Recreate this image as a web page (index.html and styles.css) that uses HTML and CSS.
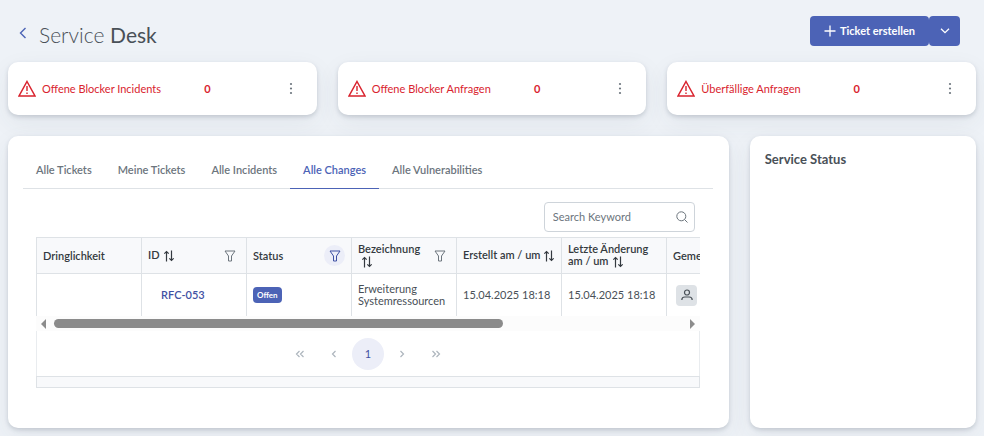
FILE: index.html
```html
<!DOCTYPE html>
<html lang="de">
<head>
<meta charset="utf-8">
<meta name="viewport" content="width=device-width, initial-scale=1">
<title>Service Desk</title>
<link rel="stylesheet" href="styles.css">
</head>
<body>
<svg class="sprite" aria-hidden="true">
  <symbol id="warn" viewBox="0 0 18 17"><path d="M9 1.500 17 16H1Z" fill="none" stroke="currentColor" stroke-width="1.500"/><path d="M9 6v5M9 12.500v1.500" fill="none" stroke="currentColor" stroke-width="1.400"/></symbol>
  <symbol id="dots" viewBox="0 0 14 14"><g fill="currentColor"><circle cx="7" cy="2" r="1.100"/><circle cx="7" cy="6.500" r="1.100"/><circle cx="7" cy="11" r="1.100"/></g></symbol>
  <symbol id="sort" viewBox="0 0 10 12"><path d="M2.500 11.500V1.500M.3 3.700l2.200-2.200 2.200 2.200M7.500 .5v10M5.300 8.300l2.200 2.200 2.200-2.200" fill="none" stroke="currentColor" stroke-width="1.200"/></symbol>
  <symbol id="filter" viewBox="0 0 12 12"><path d="M1 1h10L7.500 6v5H4.500V6Z" fill="none" stroke="currentColor" stroke-linejoin="round"/></symbol>
</svg>
<header class="topbar">
  <a class="back" href="#" aria-label="Zurück"><svg width="8" height="12" viewBox="0 0 8 12"><path d="M6.500 1 1.500 6l5 5" fill="none" stroke="currentColor" stroke-width="1.400"/></svg></a>
  <h1>Service <span>Desk</span></h1>
  <div class="split">
    <button class="primary create" type="button"><svg width="12" height="12" viewBox="0 0 12 12"><path d="M6 .5v11M.5 6h11" fill="none" stroke="currentColor" stroke-width="1.300"/></svg>Ticket erstellen</button>
    <button class="primary more" type="button" aria-label="Weitere Aktionen"><svg width="10" height="6" viewBox="0 0 10 6"><path d="m1 .7 4 4 4-4" fill="none" stroke="currentColor" stroke-width="1.300"/></svg></button>
  </div>
</header>
<main class="grid">
  <section class="card kpi">
    <svg class="warn"><use href="#warn"/></svg>
    <span class="kpi-label">Offene Blocker Incidents</span><span class="kpi-value">0</span>
    <button class="plain menu" type="button" aria-label="Menü"><svg width="14" height="14"><use href="#dots"/></svg></button>
  </section>
  <section class="card kpi">
    <svg class="warn"><use href="#warn"/></svg>
    <span class="kpi-label">Offene Blocker Anfragen</span><span class="kpi-value">0</span>
    <button class="plain menu" type="button" aria-label="Menü"><svg width="14" height="14"><use href="#dots"/></svg></button>
  </section>
  <section class="card kpi">
    <svg class="warn"><use href="#warn"/></svg>
    <span class="kpi-label">Überfällige Anfragen</span><span class="kpi-value">0</span>
    <button class="plain menu" type="button" aria-label="Menü"><svg width="14" height="14"><use href="#dots"/></svg></button>
  </section>

  <section class="card tickets">
    <nav class="tabs">
      <a href="#">Alle Tickets</a><a href="#">Meine Tickets</a><a href="#">Alle Incidents</a><a href="#" class="active" aria-current="page">Alle Changes</a><a href="#">Alle Vulnerabilities</a>
    </nav>
    <div class="panel">
      <div class="toolbar">
        <label class="search"><input type="text" placeholder="Search Keyword" aria-label="Search Keyword"><svg width="12" height="12" viewBox="0 0 12 12"><g fill="none" stroke="currentColor"><circle cx="5.300" cy="5.300" r="4.500"/><path d="m8.500 8.500 3 3"/></g></svg></label>
      </div>
      <div class="scroller">
        <table>
          <thead>
            <tr>
              <th>Dringlichkeit</th>
              <th><div class="head"><span>ID<svg class="sort"><use href="#sort"/></svg></span><button class="plain filter" type="button" aria-label="ID filtern"><svg width="12" height="12"><use href="#filter"/></svg></button></div></th>
              <th><div class="head"><span>Status</span><button class="plain filter on" type="button" aria-label="Status filtern"><svg width="12" height="12"><use href="#filter"/></svg></button></div></th>
              <th><div class="head"><span>Bezeichnung<svg class="sort"><use href="#sort"/></svg></span><button class="plain filter" type="button" aria-label="Bezeichnung filtern"><svg width="12" height="12"><use href="#filter"/></svg></button></div></th>
              <th>Erstellt am / um<svg class="sort"><use href="#sort"/></svg></th>
              <th>Letzte Änderung am / um<svg class="sort"><use href="#sort"/></svg></th>
              <th>Geme</th>
            </tr>
          </thead>
          <tbody>
            <tr>
              <td></td>
              <td><a class="ticket" href="#">RFC-053</a></td>
              <td><span class="badge">Offen</span></td>
              <td>Erweiterung Systemressourcen</td>
              <td>15.04.2025 18:18</td>
              <td>15.04.2025 18:18</td>
              <td><span class="avatar"><svg width="12" height="12" viewBox="0 0 12 12"><g fill="none" stroke="currentColor" stroke-width="1.200"><circle cx="6" cy="3.500" r="2.500"/><path d="M.8 11c0-2 1.200-3 3-3h4.400c1.800 0 3 1 3 3"/></g></svg></span></td>
            </tr>
          </tbody>
        </table>
      </div>
      <div class="scrollbar" aria-hidden="true"><i class="arrow left"></i><div class="track"><div class="thumb"></div></div><i class="arrow right"></i></div>
      <nav class="pager" aria-label="Seiten">
        <button class="plain" type="button" disabled aria-label="Erste Seite"><svg width="10" height="8" viewBox="0 0 10 8"><path d="M4.500 1 1.500 4l3 3M8.500 1l-3 3 3 3"/></svg></button>
        <button class="plain" type="button" disabled aria-label="Vorherige Seite"><svg width="10" height="8" viewBox="0 0 10 8"><path d="M6.500 1l-3 3 3 3"/></svg></button>
        <button class="plain current" type="button">1</button>
        <button class="plain" type="button" disabled aria-label="Nächste Seite"><svg width="10" height="8" viewBox="0 0 10 8"><path d="m3.500 1 3 3-3 3"/></svg></button>
        <button class="plain" type="button" disabled aria-label="Letzte Seite"><svg width="10" height="8" viewBox="0 0 10 8"><path d="m1.500 1 3 3-3 3M5.500 1l3 3-3 3"/></svg></button>
      </nav>
      <div class="table-foot"></div>
    </div>
  </section>
  <section class="card status"><h2>Service Status</h2></section>
</main>
</body>
</html>
```
FILE: styles.css
```css
* { box-sizing: border-box; }
body { margin: 0; padding: 0 8px 8px; background: #eef2f7; color: #495057; font: 11px/12px Lato, "Open Sans", sans-serif; }
.sprite { position: absolute; width: 0; height: 0; }
svg { flex: none; display: block; }
a { color: inherit; text-decoration: none; }
h1, h2 { margin: 0; }
button { font: inherit; }
.plain { border: 0; padding: 0; background: none; color: inherit; display: grid; place-items: center; }

.topbar { display: flex; align-items: center; height: 62px; padding: 8px 16px 0 11px; }
.back { color: #4c63b6; margin: 0 12px 4px 0; }
h1 { font-size: 21px; line-height: 26px; font-weight: 300; }
h1 span { font-weight: 400; }
.split { display: flex; margin-left: auto; margin-bottom: 8px; }
.primary { height: 30px; border: 0; border-radius: 4px; background: #4c63b6; color: #fff; font-weight: 700; display: flex; align-items: center; justify-content: center; gap: 4px; }
.create { padding: 0 14px; }
.more { width: 31px; padding: 0; }

.grid { display: grid; grid-template-columns: repeat(12, minmax(0, 1fr)); gap: 21px; }
.card { background: #fff; border-radius: 10px; box-shadow: 0 2px 4px rgba(60, 70, 90, .2), 0 8px 24px rgba(60, 70, 90, .07); }
.kpi { grid-column: span 4; height: 53px; padding: 0 16px 0 10px; display: flex; align-items: center; color: #d9232e; }
.warn { width: 18px; height: 17px; margin-right: 6px; }
.kpi-value { margin: 0 auto; font-weight: 700; }
.menu { width: 20px; height: 20px; margin-left: 27px; color: #6c757d; }

.tickets { grid-column: span 9; padding: 15px 16px 27px 15px; min-width: 0; }
.tabs { display: flex; border-bottom: 1px solid #dee2e6; color: #6c757d; font-weight: 600; }
.tabs a { padding: 13px 13px 12px; margin-bottom: -1px; border-bottom: 1px solid transparent; }
.tabs .active { color: #4c63b6; border-color: #4c63b6; }
.panel { padding: 13px; }
.toolbar { display: flex; justify-content: flex-end; padding: 0 5px 5px; }
.search { display: flex; align-items: center; width: 151px; height: 30px; border: 1px solid #ced4da; border-radius: 4px; padding: 0 6px 0 8px; color: #6c757d; }
.search input { flex: 1; min-width: 0; border: 0; padding: 0; outline: 0; background: none; font: inherit; color: inherit; }
.search input::placeholder { color: #6c757d; opacity: 1; }

.scroller { overflow: hidden; }
table { width: 735px; table-layout: fixed; border-collapse: separate; border-spacing: 0; }
th, td { border-left: 1px solid #dee2e6; padding: 0 6px; text-align: left; }
th { height: 37px; border-top: 1px solid #dee2e6; border-bottom: 1px solid #dee2e6; background: #f8f9fb; color: #343a40; font-weight: 600; }
td { height: 42px; }
.head { display: flex; align-items: center; justify-content: space-between; }
.sort { display: inline-block; width: 10px; height: 12px; margin-left: 4px; vertical-align: -3px; }
.filter { width: 21px; height: 21px; border-radius: 50%; color: #6c757d; flex: none; }
.filter.on { background: #eceef8; color: #3f51a3; }
.ticket { display: block; padding-left: 13px; color: #3f51a3; font-weight: 600; }
.badge { display: inline-block; padding: 2px 4px; border-radius: 4px; background: #4c63b6; color: #fff; font-size: 8px; font-weight: 700; }
.avatar { display: grid; place-items: center; width: 21px; height: 21px; margin-left: 3px; border-radius: 4px; background: #dee2e6; }

.scrollbar { display: flex; align-items: center; gap: 8px; height: 15px; padding: 0 5px; background: #fcfcfc; }
.arrow { width: 0; height: 0; border: 5px solid transparent; }
.left { border-left: 0; border-right-color: #8b8b8b; }
.right { border-right: 0; border-left-color: #8b8b8b; }
.track { flex: 1; }
.thumb { width: 71.5%; height: 9px; border-radius: 5px; background: #8b8b8b; }
.pager { display: flex; align-items: center; justify-content: center; gap: 2px; height: 45px; border: solid #e9ecef; border-width: 0 1px; }
.pager button { width: 32px; height: 32px; border-radius: 50%; color: #adb5bd; }
.pager svg { fill: none; stroke: currentColor; stroke-width: 1.2; }
.pager .current { background: #eceef8; color: #3f51a3; }
.table-foot { height: 12px; border: 1px solid #dee2e6; background: #f8f9fb; }

.status { grid-column: span 3; padding: 15px; }
h2 { font-size: 13px; line-height: 17px; font-weight: 700; }
```
